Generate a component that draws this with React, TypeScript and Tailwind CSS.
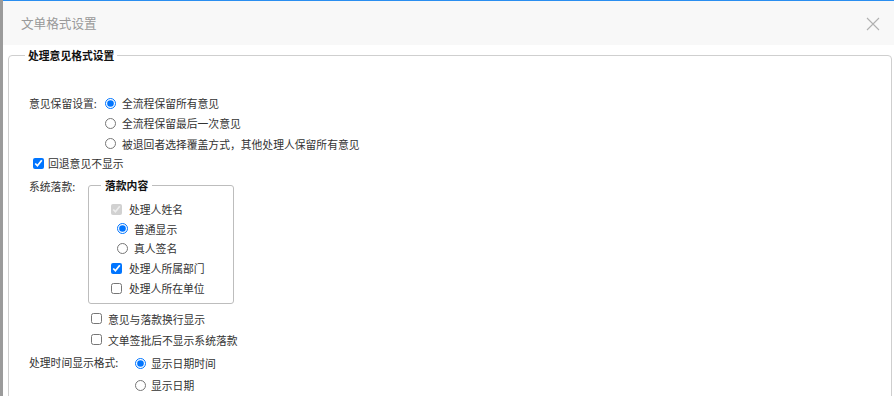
import React from "react"

const font = { fontFamily: '"Microsoft YaHei", "Noto Sans CJK SC", "Noto Sans", sans-serif' }

const Radio = ({ name, checked }: { name: string; checked?: boolean }) => (
  <input type="radio" name={name} defaultChecked={checked} className="m-0 w-[11px] h-[11px] shrink-0 accent-[#0075ff]" />
)

const Check = ({ checked, disabled }: { checked?: boolean; disabled?: boolean }) => (
  <input
    type="checkbox"
    defaultChecked={checked}
    disabled={disabled}
    className="m-0 w-[11px] h-[11px] shrink-0 accent-[#0075ff]"
  />
)

export default function App() {
  return (
    <div className="flex w-[894px] h-[396px] overflow-hidden bg-white text-[10.8px] leading-[14px] text-[#333]" style={font}>
      {/* dimmed page behind the dialog */}
      <div className="w-[3px] shrink-0 bg-[#9b9b9b]" />

      <div className="flex-1 flex flex-col border-t border-[#2a8ef0]">
        {/* header */}
        <div className="h-[44px] shrink-0 flex items-center justify-between bg-[#f8f8f8] pl-[18px] pr-[14px]">
          <span className="text-[12.6px] text-[#999]">文单格式设置</span>
          <svg width="14" height="14" viewBox="0 0 14 14" className="mt-[1px]">
            <path d="M1 1 L13 13 M13 1 L1 13" stroke="#b0b0b0" strokeWidth="1.1" fill="none" />
          </svg>
        </div>

        {/* body, runs on below the visible area */}
        <fieldset className="shrink-0 mt-[3px] ml-[5px] mr-[2px] border border-[#cfcfcf] rounded-[4px] pl-[20px] pt-[31px] pb-[40px] min-w-0">
          <legend className="-ml-[4px] px-[3px] font-bold text-[#111] leading-[14px]">处理意见格式设置</legend>

          <div className="flex">
            <div className="w-[76px] h-[20px] flex items-center">意见保留设置:</div>
            <div className="flex flex-col">
              <label className="h-[20px] flex items-center gap-[6px]">
                <Radio name="keep" checked />
                <span>全流程保留所有意见</span>
              </label>
              <label className="h-[20px] flex items-center gap-[6px]">
                <Radio name="keep" />
                <span>全流程保留最后一次意见</span>
              </label>
              <label className="h-[21px] flex items-center gap-[6px]">
                <Radio name="keep" />
                <span>被退回者选择覆盖方式，其他处理人保留所有意见</span>
              </label>
            </div>
          </div>

          <label className="h-[18px] flex items-center gap-[4px] pl-[4px]">
            <Check checked />
            <span>回退意见不显示</span>
          </label>

          <div className="flex items-start mt-[6px]">
            <div className="w-[59px] h-[14px] mt-[1px]">系统落款:</div>
            <fieldset className="w-[146px] border border-[#bdbdbd] rounded-[3px] pl-[22px] pt-[7px] pb-[5px]">
              <legend className="-ml-[10px] px-[4px] font-bold text-[#111] leading-[14px]">落款内容</legend>
              <label className="h-[20px] flex items-center gap-[7px]">
                <Check checked disabled />
                <span>处理人姓名</span>
              </label>
              <label className="h-[19px] flex items-center gap-[6px] pl-[6px]">
                <Radio name="sign" checked />
                <span>普通显示</span>
              </label>
              <label className="h-[20px] flex items-center gap-[6px] pl-[6px]">
                <Radio name="sign" />
                <span>真人签名</span>
              </label>
              <label className="h-[20px] flex items-center gap-[7px]">
                <Check checked />
                <span>处理人所属部门</span>
              </label>
              <label className="h-[20px] flex items-center gap-[7px]">
                <Check />
                <span>处理人所在单位</span>
              </label>
            </fieldset>
          </div>

          <label className="mt-[4px] h-[21px] flex items-center gap-[6px] pl-[62px]">
            <Check />
            <span>意见与落款换行显示</span>
          </label>
          <label className="h-[21px] flex items-center gap-[6px] pl-[62px]">
            <Check />
            <span>文单签批后不显示系统落款</span>
          </label>

          <div className="flex mt-[2px]">
            <div className="w-[106px] h-[20px] flex items-center">处理时间显示格式:</div>
            <div className="flex flex-col">
              <label className="h-[22px] flex items-center gap-[5px]">
                <Radio name="time" checked />
                <span>显示日期时间</span>
              </label>
              <label className="h-[22px] flex items-center gap-[5px]">
                <Radio name="time" />
                <span>显示日期</span>
              </label>
            </div>
          </div>
        </fieldset>
      </div>
    </div>
  )
}
